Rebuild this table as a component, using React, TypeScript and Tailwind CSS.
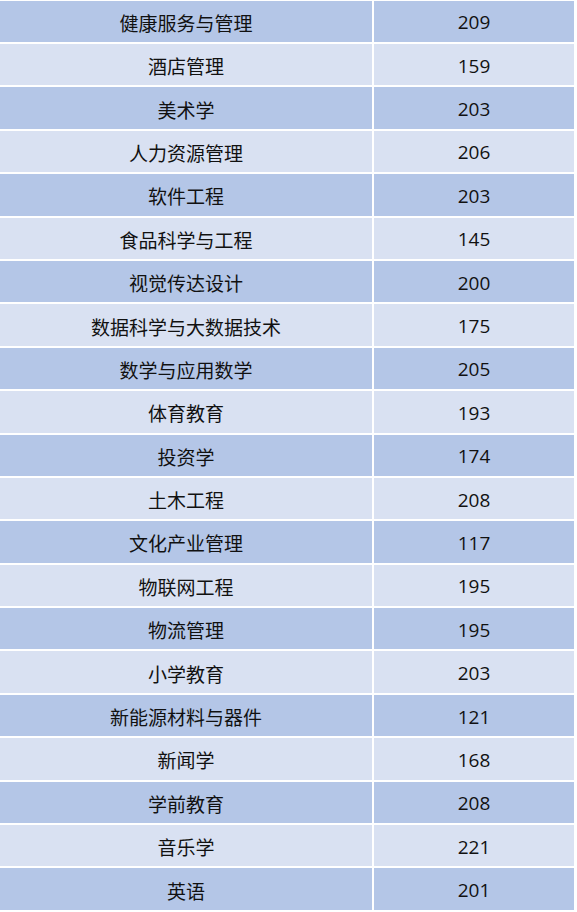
import React from "react";

const rows: [string, string][] = [
  ["健康服务与管理", "209"],
  ["酒店管理", "159"],
  ["美术学", "203"],
  ["人力资源管理", "206"],
  ["软件工程", "203"],
  ["食品科学与工程", "145"],
  ["视觉传达设计", "200"],
  ["数据科学与大数据技术", "175"],
  ["数学与应用数学", "205"],
  ["体育教育", "193"],
  ["投资学", "174"],
  ["土木工程", "208"],
  ["文化产业管理", "117"],
  ["物联网工程", "195"],
  ["物流管理", "195"],
  ["小学教育", "203"],
  ["新能源材料与器件", "121"],
  ["新闻学", "168"],
  ["学前教育", "208"],
  ["音乐学", "221"],
  ["英语", "201"],
];

export default function App() {
  return (
    <div className="w-[577px] h-[912px] overflow-hidden bg-white pt-[0.6px] flex flex-col gap-[2px] text-[#111]">
      {rows.map(([name, n], i) => {
        const bg = i % 2 === 0 ? "bg-[#b4c6e7]" : "bg-[#d9e1f2]";
        return (
          <div key={i} className="flex gap-[2px] h-[41.4px] shrink-0">
            <div
              className={`w-[372px] ${bg} flex items-center justify-center text-[19px] leading-none pt-[2px]`}
              style={{ fontFamily: '"Noto Sans CJK SC", "Noto Sans", sans-serif' }}
            >
              {name}
            </div>
            <div
              className={`w-[200px] ${bg} flex items-center justify-center text-[19px] leading-none pt-[3px]`}
              style={{ fontFamily: '"Open Sans", "Noto Sans", sans-serif' }}
            >
              {n}
            </div>
          </div>
        );
      })}
    </div>
  );
}
